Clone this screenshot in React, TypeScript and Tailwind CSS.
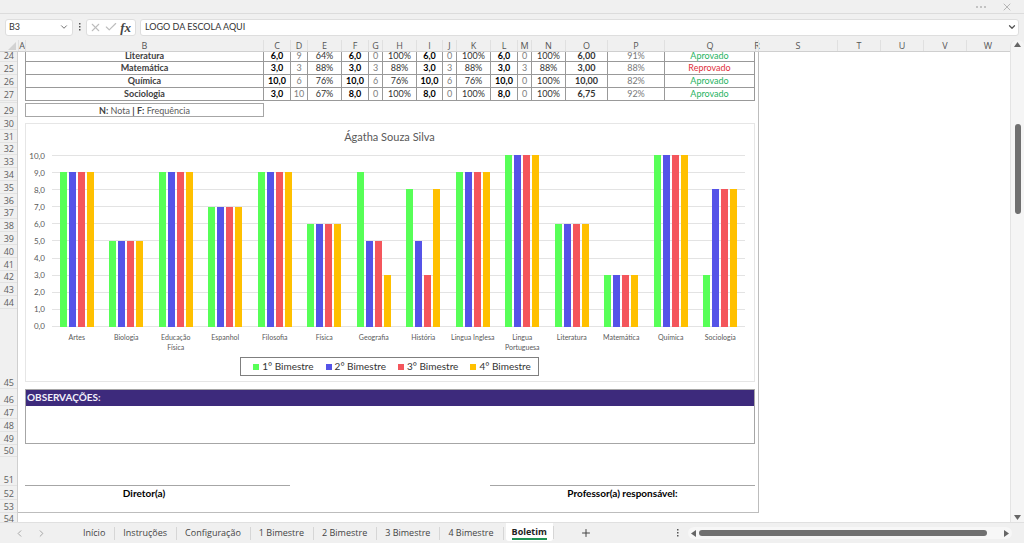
import { useState } from 'react';
import { Check, ChevronDown, ChevronLeft, ChevronRight, Plus, X } from 'lucide-react';

const COLUMNS = [
  { name: 'A', width: 'w-[7px]' },
  { name: 'B', width: 'w-[238px]' },
  { name: 'C', width: 'w-[27px]' },
  { name: 'D', width: 'w-[17px]' },
  { name: 'E', width: 'w-[34px]' },
  { name: 'F', width: 'w-[27px]' },
  { name: 'G', width: 'w-[14px]' },
  { name: 'H', width: 'w-[34px]' },
  { name: 'I', width: 'w-[26px]' },
  { name: 'J', width: 'w-[14px]' },
  { name: 'K', width: 'w-[34px]' },
  { name: 'L', width: 'w-[27px]' },
  { name: 'M', width: 'w-[14px]' },
  { name: 'N', width: 'w-[34px]' },
  { name: 'O', width: 'w-[42px]' },
  { name: 'P', width: 'w-[57px]' },
  { name: 'Q', width: 'w-[91px]' },
  { name: 'R', width: 'w-[3px]' },
  { name: 'S', width: 'w-[79px]' },
  { name: 'T', width: 'w-[43px]' },
  { name: 'U', width: 'w-[43px]' },
  { name: 'V', width: 'w-[43px]' },
  { name: 'W', width: 'w-[43px]' },
];

const TABLE_COLUMNS = COLUMNS.slice(1, 17);

// Rows that differ from the default 13px height
const ROW_HEIGHTS: Record<number, string> = {
  24: 'h-[10px]',
  28: 'h-[2px] overflow-hidden',
  29: 'h-[14px]',
  32: 'h-[12px]',
  37: 'h-[12px]',
  42: 'h-[12px]',
  45: 'h-[80px]',
  46: 'h-[17px]',
  50: 'h-[12px]',
  51: 'h-[29px]',
  52: 'h-[14px]',
  54: 'h-[12px]',
};

const ROWS = Array.from({ length: 31 }, (_, i) => 24 + i);

const GRADES = [
  ['Literatura', '6,0', '9', '64%', '6,0', '0', '100%', '6,0', '0', '100%', '6,0', '0', '100%', '6,00', '91%', 'Aprovado'],
  ['Matemática', '3,0', '3', '88%', '3,0', '3', '88%', '3,0', '3', '88%', '3,0', '3', '88%', '3,00', '88%', 'Reprovado'],
  ['Química', '10,0', '6', '76%', '10,0', '6', '76%', '10,0', '6', '76%', '10,0', '0', '100%', '10,00', '82%', 'Aprovado'],
  ['Sociologia', '3,0', '10', '67%', '8,0', '0', '100%', '8,0', '0', '100%', '8,0', '0', '100%', '6,75', '92%', 'Aprovado'],
];

const SUBJECTS = [
  { name: 'Artes', grades: [9, 9, 9, 9] },
  { name: 'Biologia', grades: [5, 5, 5, 5] },
  { name: 'Educação Física', grades: [9, 9, 9, 9] },
  { name: 'Espanhol', grades: [7, 7, 7, 7] },
  { name: 'Filosofia', grades: [9, 9, 9, 9] },
  { name: 'Física', grades: [6, 6, 6, 6] },
  { name: 'Geografia', grades: [9, 5, 5, 3] },
  { name: 'História', grades: [8, 5, 3, 8] },
  { name: 'Lingua Inglesa', grades: [9, 9, 9, 9] },
  { name: 'Lingua Portuguesa', grades: [10, 10, 10, 10] },
  { name: 'Literatura', grades: [6, 6, 6, 6] },
  { name: 'Matemática', grades: [3, 3, 3, 3] },
  { name: 'Química', grades: [10, 10, 10, 10] },
  { name: 'Sociologia', grades: [3, 8, 8, 8] },
];

const SERIES = [
  { name: '1° Bimestre', color: 'bg-[#57ff57]' },
  { name: '2° Bimestre', color: 'bg-[#5553e8]' },
  { name: '3° Bimestre', color: 'bg-[#f4565c]' },
  { name: '4° Bimestre', color: 'bg-[#ffc000]' },
];

const AXIS = ['10,0', '9,0', '8,0', '7,0', '6,0', '5,0', '4,0', '3,0', '2,0', '1,0', '0,0'];

const TABS = [
  'Início',
  'Instruções',
  'Configuração',
  '1 Bimestre',
  '2 Bimestre',
  '3 Bimestre',
  '4 Bimestre',
  'Boletim',
];

function cellStyle(index: number, value: string) {
  if (index === 0) return 'font-bold text-[#404040]';
  if (index === 15) return value === 'Aprovado' ? 'text-[#1fb35f]' : 'text-[#e0303c]';
  if (index === 14) return 'text-[#7a7a7a]';
  if (index === 13) return 'font-bold text-[#333333]';
  if (index % 3 === 1) return 'font-bold text-black';
  if (index % 3 === 2) return 'text-[#808080]';
  return 'text-[#333333]';
}

function TitleBar() {
  return (
    <div className="flex h-[14px] shrink-0 items-center justify-end gap-[14px] border-b border-[#dcdcdc] pr-[11px] text-[#b5b5b5]">
      <button aria-label="Mais opções">
        <svg width="12" height="4" viewBox="0 0 12 4" fill="currentColor">
          <circle cx="2" cy="2" r="1" />
          <circle cx="6" cy="2" r="1" />
          <circle cx="10" cy="2" r="1" />
        </svg>
      </button>
      <button aria-label="Fechar">
        <X className="size-[12px]" strokeWidth={2} />
      </button>
    </div>
  );
}

function FormulaBar() {
  return (
    <div className="flex h-[26px] shrink-0 items-center gap-[4px] pr-[5px] pl-[5px] text-[#333333]">
      <div className="flex h-[17px] w-[68px] items-center rounded-[3px] border border-[#dedede] bg-white px-[3px]">
        <input
          aria-label="Caixa de nome"
          defaultValue="B3"
          className="w-full min-w-0 bg-transparent font-[Lato,sans-serif] text-[9px] outline-none"
        />
        <button aria-label="Abrir caixa de nome">
          <ChevronDown className="size-[10px] text-[#555555]" strokeWidth={2} />
        </button>
      </div>
      <VerticalDots />
      <div className="flex h-[17px] w-[50px] items-center justify-between rounded-[3px] border border-[#dedede] bg-white px-[2px]">
        <button aria-label="Cancelar">
          <X className="size-[13px] text-[#bdbdbd]" strokeWidth={2} />
        </button>
        <button aria-label="Inserir">
          <Check className="size-[14px] text-[#bdbdbd]" strokeWidth={2} />
        </button>
        <button
          aria-label="Inserir função"
          className="pr-[2px] font-['Liberation_Serif',serif] text-[13px] leading-none font-bold text-[#444444] italic"
        >
          fx
        </button>
      </div>
      <div className="flex h-[17px] flex-1 items-center rounded-[3px] border border-[#dedede] bg-white pr-px pl-[4px]">
        <input
          aria-label="Barra de fórmulas"
          defaultValue="LOGO DA ESCOLA AQUI"
          className="w-full bg-transparent font-[Lato,sans-serif] text-[9px] outline-none"
        />
        <button aria-label="Expandir barra de fórmulas">
          <ChevronDown className="size-[10px] text-[#555555]" strokeWidth={3} />
        </button>
      </div>
    </div>
  );
}

function VerticalDots() {
  return (
    <svg className="shrink-0" width="5" height="10" viewBox="0 0 5 10" fill="#555555">
      <rect x="2" y="1" width="1.5" height="1.5" />
      <rect x="2" y="4" width="1.5" height="1.5" />
      <rect x="2" y="7" width="1.5" height="1.5" />
    </svg>
  );
}

function ColumnHeaders() {
  return (
    <div className="flex h-[12px] shrink-0 border-b border-[#cfcfcf] text-[9px] leading-[12px] text-[#555555]">
      <div className="flex w-[18px] shrink-0 items-end justify-end pr-[2px] pb-px">
        <svg width="8" height="8" viewBox="0 0 8 8" fill="#d2d2d2">
          <path d="M8 0V8H0Z" />
        </svg>
      </div>
      {COLUMNS.map(column => (
        <div key={column.name} className={`flex shrink-0 justify-center border-l border-[#e0e0e0] ${column.width}`}>
          {column.name}
        </div>
      ))}
    </div>
  );
}

function RowHeaders() {
  return (
    <div className="w-[18px] shrink-0 border-r border-[#cfcfcf] text-[9px] leading-[10px] text-[#606060]">
      {ROWS.map(row => (
        <div
          key={row}
          className={`flex items-end justify-end border-b border-[#e2e2e2] pr-[3px] ${ROW_HEIGHTS[row] ?? 'h-[13px]'}`}
        >
          {row}
        </div>
      ))}
    </div>
  );
}

function GradesTable() {
  return (
    <table className="w-[730px] table-fixed border-separate border-spacing-0 text-[9px] leading-[8px]">
      <colgroup>
        {TABLE_COLUMNS.map(column => (
          <col key={column.name} className={column.width} />
        ))}
      </colgroup>
      <tbody>
        {GRADES.map((row, r) => (
          <tr key={row[0]} className={r === 0 ? 'h-[10px]' : 'h-[13px]'}>
            {row.map((value, i) => (
              <td
                key={i}
                className={`border-b border-l border-[#999999] p-0 pb-px text-center whitespace-nowrap last:border-r ${cellStyle(i, value)}`}
              >
                {value}
              </td>
            ))}
          </tr>
        ))}
      </tbody>
    </table>
  );
}

function GradesChart() {
  return (
    <section className="mt-[6px] h-[259px] border border-[#e6e6e6] pr-[9px] text-[#595959]">
      <h2 className="pt-[5px] pl-[8px] text-center text-[11px] leading-[16px]">Ágatha Souza Silva</h2>
      <div className="mt-[10px] flex gap-[7px]">
        <ul className="flex w-[19px] flex-col justify-between text-[8px]">
          {AXIS.map(label => (
            <li key={label} className="flex h-px items-center justify-end leading-none">
              {label}
            </li>
          ))}
        </ul>
        <div className="relative h-[172px] flex-1">
          {/* Grid lines behind the bars */}
          <div className="absolute inset-0 flex flex-col justify-between">
            {AXIS.map(label => (
              <div key={label} className="h-px bg-[#e3e3e3]" />
            ))}
          </div>
          <div className="relative flex h-full">
            {SUBJECTS.map(subject => (
              <div key={subject.name} className="flex flex-1 items-end justify-center gap-[2px]">
                {subject.grades.map((grade, i) => (
                  <div key={i} className={`w-[7px] ${SERIES[i].color}`} style={{ height: `${grade * 10}%` }} />
                ))}
              </div>
            ))}
          </div>
        </div>
      </div>
      <div className="mt-[5px] flex h-[20px] pl-[26px] text-center text-[7px] leading-[10px]">
        {SUBJECTS.map(subject => (
          <div key={subject.name} className="flex-1 px-px">
            {subject.name}
          </div>
        ))}
      </div>
      <div className="mt-[5px] flex justify-center pl-[7px]">
        <ul className="flex h-[19px] w-[299px] items-center justify-center gap-[12px] border border-[#7f7f7f] pl-[6px] text-[10px] text-[#333333]">
          {SERIES.map(series => (
            <li key={series.name} className="flex items-center gap-[3px] whitespace-nowrap">
              <span className={`size-[6px] ${series.color}`} />
              {series.name}
            </li>
          ))}
        </ul>
      </div>
    </section>
  );
}

function Sheet() {
  return (
    <main className="h-[461px] w-[741px] shrink-0 border-r border-b border-[#bdbdbd] pr-[3px] pl-[7px] font-[Lato,'Liberation_Sans',sans-serif]">
      <GradesTable />
      <p className="mt-[2px] h-[14px] w-[239px] border border-[#a6a6a6] text-center text-[9px] leading-[13px] text-[#595959]">
        <b className="text-[#404040]">N:</b> Nota <b className="text-[#404040]">|</b>{' '}
        <b className="text-[#404040]">F:</b> Frequência
      </p>
      <GradesChart />
      <section className="mt-[7px] h-[55px] border border-[#a6a6a6]">
        <h2 className="h-[16px] bg-[#3d2a7c] pl-px text-[10px] leading-[15px] font-bold text-[#f2effa]">OBSERVAÇÕES:</h2>
      </section>
      <div className="mt-[41px] flex justify-between text-[10px] leading-[15px] font-bold text-black">
        <div className="w-[265px] border-t border-[#a6a6a6] pr-[27px] text-center">Diretor(a)</div>
        <div className="w-[265px] border-t border-[#a6a6a6] text-center">Professor(a) responsável:</div>
      </div>
    </main>
  );
}

function VerticalScrollbar() {
  return (
    <div className="flex w-[14px] shrink-0 flex-col items-center justify-between rounded-t-[6px] border-l border-[#e4e4e4] bg-[#f5f5f5] py-[2px]">
      <button aria-label="Rolar para cima">
        <svg width="7" height="5" viewBox="0 0 7 5" fill="#666666">
          <path d="M3.5 0L7 5H0Z" />
        </svg>
      </button>
      <div className="mt-[77px] h-[90px] w-[6px] rounded-full bg-[#707070]" />
      <div className="flex-1" />
      <button aria-label="Rolar para baixo">
        <svg width="7" height="5" viewBox="0 0 7 5" fill="#666666">
          <path d="M0 0H7L3.5 5Z" />
        </svg>
      </button>
    </div>
  );
}

function SheetTabs() {
  const [active, setActive] = useState('Boletim');

  return (
    <footer className="flex h-[21px] shrink-0 border-t border-[#e0e0e0] bg-[#f0f0f0] text-[9px] text-[#444444]">
      <div className="flex w-[75px] shrink-0 items-center gap-[11px] pl-[14px] text-[#a0a0a0]">
        <button aria-label="Planilha anterior">
          <ChevronLeft className="size-[11px]" strokeWidth={2} />
        </button>
        <button aria-label="Próxima planilha">
          <ChevronRight className="size-[11px]" strokeWidth={2} />
        </button>
      </div>
      <nav className="flex shrink-0 items-start">
        {TABS.map(tab => (
          <div key={tab} className="flex items-center">
            {tab === active ? (
              <button className="ml-[2px] h-[18px] rounded-b-[3px] bg-white px-[6px] font-bold text-[#222222]">
                <span className="block border-b-2 border-[#1f9254] leading-[13px]">{tab}</span>
              </button>
            ) : (
              <button onClick={() => setActive(tab)} className="h-[20px] pr-[9px] pl-[8px]">
                {tab}
              </button>
            )}
            <span className="h-[13px] w-px bg-[#d6d6d6]" />
          </div>
        ))}
      </nav>
      <button aria-label="Nova planilha" className="ml-[26px]">
        <Plus className="size-[12px]" strokeWidth={2} />
      </button>
      <div className="flex flex-1 items-center justify-end gap-[8px] pr-[12px]">
        <VerticalDots />
        <div className="flex h-[12px] w-[324px] items-center justify-between rounded-full bg-[#f7f7f7] px-[3px]">
          <button aria-label="Rolar para a esquerda">
            <svg width="5" height="7" viewBox="0 0 5 7" fill="#666666">
              <path d="M5 0V7L0 3.5Z" />
            </svg>
          </button>
          <div className="ml-[3px] h-[6px] w-[288px] rounded-full bg-[#707070]" />
          <div className="flex-1" />
          <button aria-label="Rolar para a direita">
            <svg width="5" height="7" viewBox="0 0 5 7" fill="#666666">
              <path d="M0 0V7L5 3.5Z" />
            </svg>
          </button>
        </div>
      </div>
    </footer>
  );
}

export default function App() {
  return (
    <div className="flex h-screen flex-col overflow-hidden bg-[#f0f0f0] font-['Open_Sans','Noto_Sans',sans-serif]">
      <TitleBar />
      <FormulaBar />
      <div className="flex min-h-0 flex-1">
        <div className="flex min-w-0 flex-1 flex-col overflow-hidden">
          <ColumnHeaders />
          <div className="flex min-h-0 flex-1">
            <RowHeaders />
            <div className="min-w-0 flex-1 overflow-hidden bg-white">
              <Sheet />
            </div>
          </div>
        </div>
        <VerticalScrollbar />
      </div>
      <SheetTabs />
    </div>
  );
}
